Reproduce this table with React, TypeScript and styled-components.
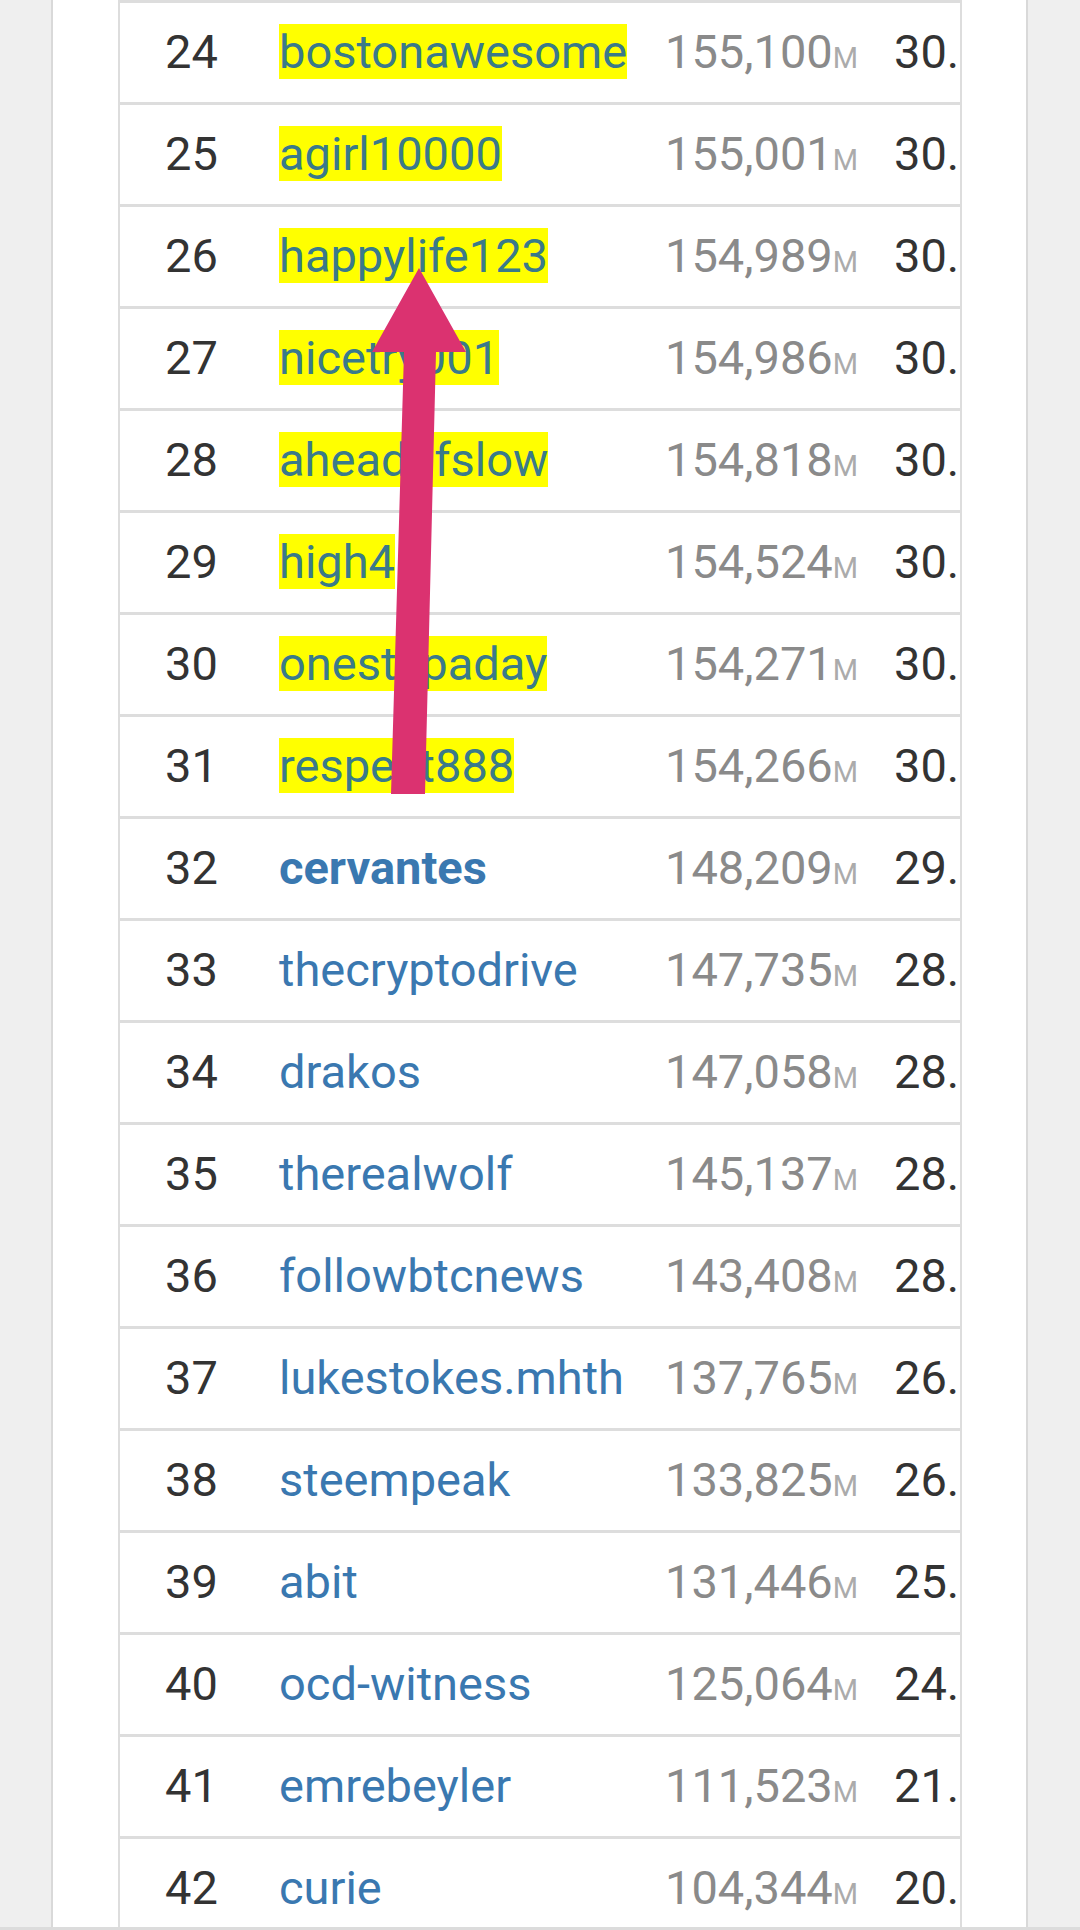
import styled, { createGlobalStyle } from "styled-components";

const GlobalStyle = createGlobalStyle`
  html,
  body {
    margin: 0;
    padding: 0;
    background: #efefef;
  }

  body {
    font-family: Roboto, "Noto Sans", "Liberation Sans", sans-serif;
  }
`;

type WitnessRow = {
  rank: number;
  name: string;
  votes: string;
  share: string;
  marked?: boolean;
  own?: boolean;
};

const WITNESSES: WitnessRow[] = [
  { rank: 24, name: "bostonawesome", votes: "155,100", share: "30.", marked: true },
  { rank: 25, name: "agirl10000", votes: "155,001", share: "30.", marked: true },
  { rank: 26, name: "happylife123", votes: "154,989", share: "30.", marked: true },
  { rank: 27, name: "nicetry001", votes: "154,986", share: "30.", marked: true },
  { rank: 28, name: "aheadofslow", votes: "154,818", share: "30.", marked: true },
  { rank: 29, name: "high4", votes: "154,524", share: "30.", marked: true },
  { rank: 30, name: "onestepaday", votes: "154,271", share: "30.", marked: true },
  { rank: 31, name: "respect888", votes: "154,266", share: "30.", marked: true },
  { rank: 32, name: "cervantes", votes: "148,209", share: "29.", own: true },
  { rank: 33, name: "thecryptodrive", votes: "147,735", share: "28." },
  { rank: 34, name: "drakos", votes: "147,058", share: "28." },
  { rank: 35, name: "therealwolf", votes: "145,137", share: "28." },
  { rank: 36, name: "followbtcnews", votes: "143,408", share: "28." },
  { rank: 37, name: "lukestokes.mhth", votes: "137,765", share: "26." },
  { rank: 38, name: "steempeak", votes: "133,825", share: "26." },
  { rank: 39, name: "abit", votes: "131,446", share: "25." },
  { rank: 40, name: "ocd-witness", votes: "125,064", share: "24." },
  { rank: 41, name: "emrebeyler", votes: "111,523", share: "21." },
  { rank: 42, name: "curie", votes: "104,344", share: "20." },
];

const Page = styled.div`
  position: relative;
  display: flex;
  flex-direction: column;
  width: 1080px;
  height: 1930px;
  overflow: hidden;
`;

const Viewport = styled.div`
  display: flex;
  flex: 1;
  min-height: 0;
  overflow: hidden;
`;

const Panel = styled.main`
  width: 977px;
  margin-left: 51px;
  box-sizing: border-box;
  padding: 0 64px 0 65px;
  background: #ffffff;
  border-left: 2px solid #d9d9d9;
  border-right: 2px solid #d9d9d9;
`;

const Table = styled.div`
  border-left: 2px solid #dddddd;
  border-right: 2px solid #dddddd;
  background: #ffffff;
`;

const Row = styled.div`
  display: grid;
  grid-template-columns: 159px 386px 229px 1fr;
  align-items: center;
  height: 99px;
  box-sizing: content-box;
  border-top: 3px solid #dddddd;
  font-size: 47px;
  white-space: nowrap;
`;

const Cell = styled.div`
  min-width: 0;
  padding-bottom: 2px;
`;

const RankCell = styled(Cell)`
  padding-left: 45px;
  color: #333333;
`;

const NameLink = styled.span<{ $marked?: boolean; $own?: boolean }>`
  color: ${(p) => (p.$marked ? "#3a7a8a" : "#3a78b0")};
  background: ${(p) => (p.$marked ? "#ffff00" : "transparent")};
  font-weight: ${(p) => (p.$own ? 700 : 400)};
`;

const VotesCell = styled(Cell)`
  color: #8a8a8a;
`;

const Unit = styled.span`
  font-size: 29px;
  color: #ababab;
`;

const ShareCell = styled(Cell)`
  overflow: hidden;
  color: #333333;
`;

const BottomEdge = styled.div`
  flex-shrink: 0;
  height: 3px;
  background: #dcdcdc;
`;

const ArrowLayer = styled.svg`
  position: absolute;
  top: 0;
  left: 0;
  width: 1080px;
  height: 1930px;
  pointer-events: none;
`;

function WitnessLine({ row }: { row: WitnessRow }) {
  return (
    <Row>
      <RankCell>{row.rank}</RankCell>
      <Cell>
        <NameLink $marked={row.marked} $own={row.own}>
          {row.name}
        </NameLink>
      </Cell>
      <VotesCell>
        {row.votes}
        <Unit>M</Unit>
      </VotesCell>
      <ShareCell>{row.share}</ShareCell>
    </Row>
  );
}

export default function App() {
  return (
    <Page>
      <GlobalStyle />
      <Viewport>
        <Panel>
          <Table>
            {WITNESSES.map((row) => (
              <WitnessLine key={row.rank} row={row} />
            ))}
          </Table>
        </Panel>
      </Viewport>
      <BottomEdge />
      <ArrowLayer viewBox="0 0 1080 1930" aria-hidden>
        <polygon
          points="419,268 466,352 436,352 425,794 391,794 404,352 372,352"
          fill="#db3270"
        />
      </ArrowLayer>
    </Page>
  );
}
